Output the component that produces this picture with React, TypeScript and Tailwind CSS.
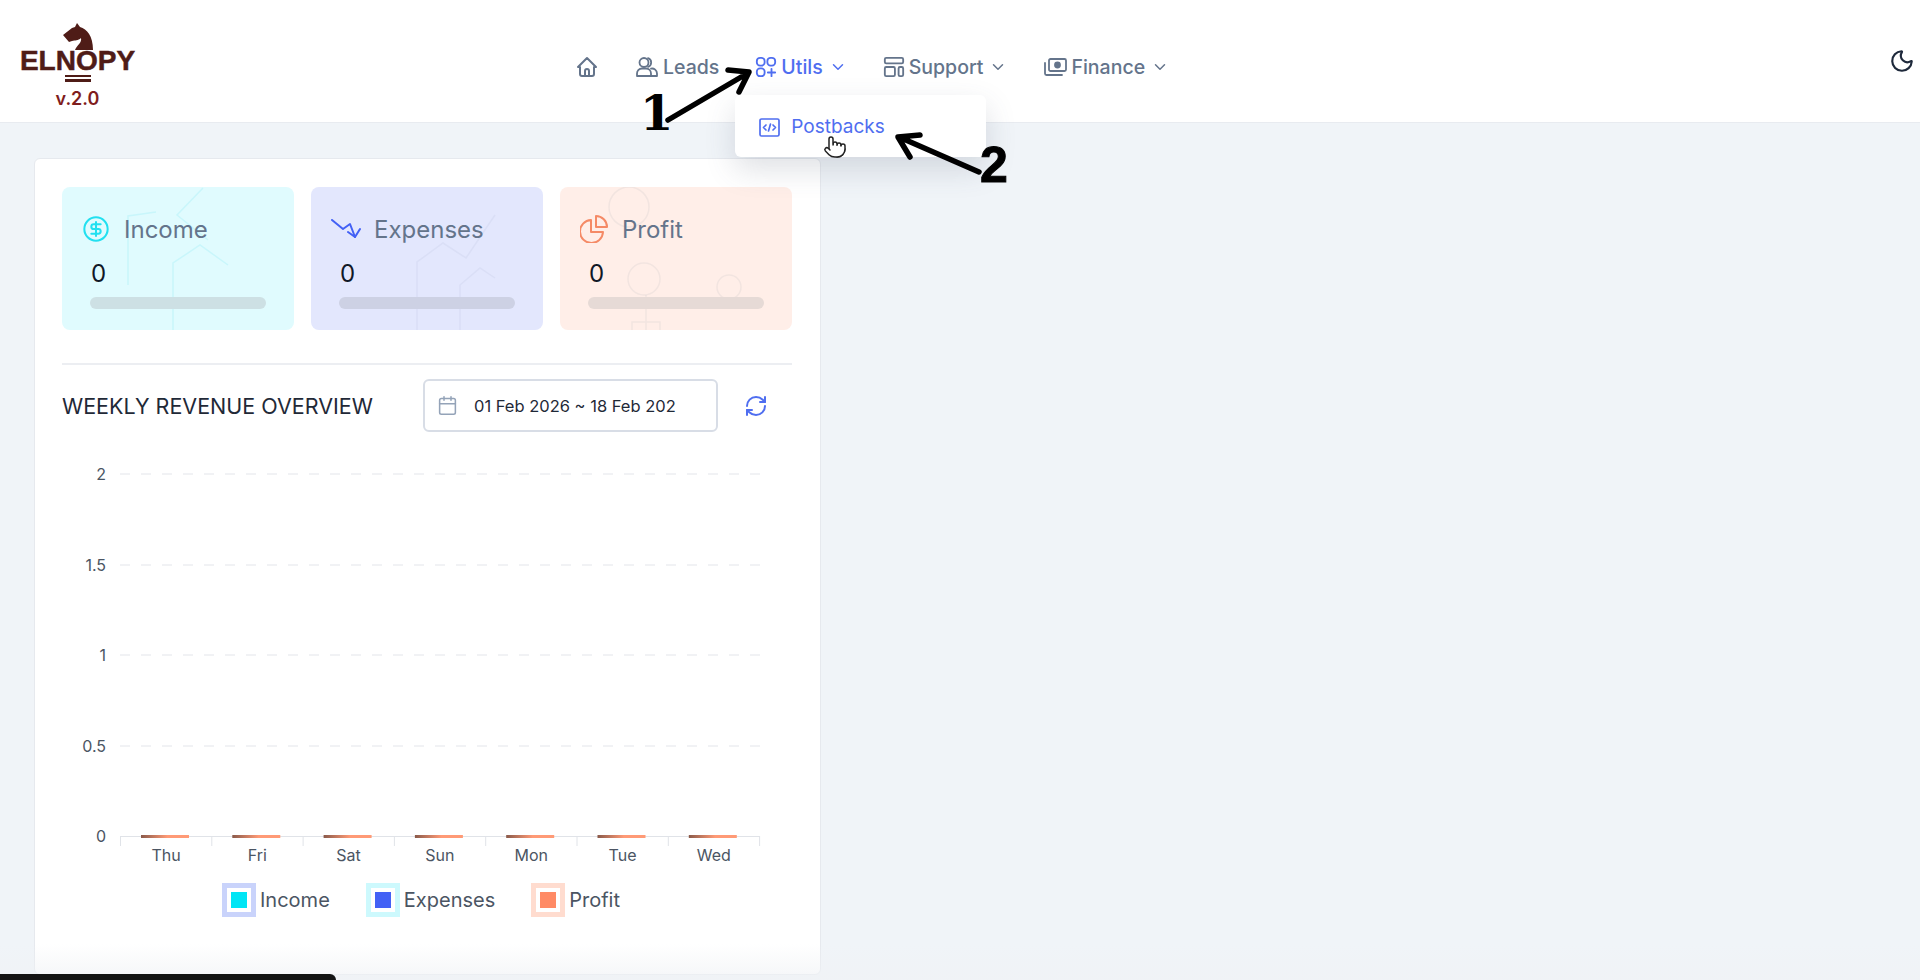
import { Calendar, ChevronDown, CircleDollarSign, Moon, Pointer, RefreshCw } from "lucide-react"
import type { ReactNode } from "react"

const FONT = "font-['Inter','Noto_Sans',sans-serif]"
const DAYS = ["Thu", "Fri", "Sat", "Sun", "Mon", "Tue", "Wed"]
const TICKS = [
  { label: "2", y: 34 },
  { label: "1.5", y: 125 },
  { label: "1", y: 215 },
  { label: "0.5", y: 306 },
]

function HomeIcon() {
  return (
    <svg width="24" height="24" viewBox="0 0 24 24" fill="none" stroke="currentColor" strokeWidth="2" strokeLinecap="round" strokeLinejoin="round">
      <path d="M3 12 12 3l9 9h-2v7a2 2 0 0 1-2 2H7a2 2 0 0 1-2-2v-7z" />
      <path d="M10 21v-5a2 2 0 0 1 4 0v5" />
    </svg>
  )
}

function UsersIcon() {
  return (
    <svg width="24" height="24" viewBox="0 0 24 24" fill="none" stroke="currentColor" strokeWidth="1.8" strokeLinecap="round" strokeLinejoin="round">
      <circle cx="9" cy="7.5" r="4.5" />
      <path d="M13 3.2a4.5 4.5 0 0 1 0 8.6" />
      <path d="M2 21v-2.500a5 5 0 0 1 5-5h4a5 5 0 0 1 5 5V21z" />
      <path d="M16 13.600a5 5 0 0 1 6 4.900V21h-6" />
    </svg>
  )
}

function AppsIcon() {
  return (
    <svg width="22" height="22" viewBox="0 0 24 24" fill="none" stroke="currentColor" strokeWidth="2" strokeLinecap="round" strokeLinejoin="round">
      <rect x="2" y="2" width="8.500" height="8.500" rx="3.500" />
      <rect x="13.500" y="2" width="8.500" height="8.500" rx="3.500" />
      <rect x="2" y="13.500" width="8.500" height="8.500" rx="3.500" />
      <path d="M14 18h8M18 14v8" />
    </svg>
  )
}

function LayoutIcon() {
  return (
    <svg width="22" height="22" viewBox="0 0 24 24" fill="none" stroke="currentColor" strokeWidth="2" strokeLinecap="round" strokeLinejoin="round">
      <rect x="2" y="2" width="20" height="6" rx="1.500" />
      <rect x="2" y="12" width="11" height="10" rx="1.500" />
      <rect x="17" y="12" width="5" height="10" rx="1.500" />
    </svg>
  )
}

function CashIcon() {
  return (
    <svg width="24" height="24" viewBox="0 0 24 24" fill="none" stroke="currentColor" strokeWidth="1.800" strokeLinecap="round" strokeLinejoin="round">
      <rect x="6" y="4" width="17" height="12" rx="1.500" />
      <circle cx="14.500" cy="10" r="2.500" fill="currentColor" />
      <path d="M2 8v10.500A1.500 1.500 0 0 0 3.500 20H19" />
    </svg>
  )
}

function CodeSquareIcon() {
  return (
    <svg width="21" height="21" viewBox="0 0 21 21" fill="none" stroke="currentColor" strokeWidth="1.700" strokeLinecap="round" strokeLinejoin="round">
      <rect x="1" y="2" width="19" height="17" rx="1.500" />
      <path d="M7 8l-2.500 2.500L7 13M14 8l2.500 2.500L14 13M11.500 7l-2 7" />
    </svg>
  )
}

function ExpensesIcon() {
  return (
    <svg width="30" height="20" viewBox="0 0 30 20" fill="none" stroke="#4361f5" strokeWidth="2" strokeLinecap="round" strokeLinejoin="round">
      <path d="M1 1l11 9 7-5 5 13" />
      <path d="M17 13l7 5 5-8" />
    </svg>
  )
}

function ProfitIcon() {
  return (
    <svg width="28" height="28" viewBox="0 0 28 28" fill="none" stroke="#f58a66" strokeWidth="2" strokeLinecap="round" strokeLinejoin="round">
      <path d="M11 5a11.500 11.500 0 1 0 12 12H11z" />
      <path d="M16 1a11 11 0 0 1 11 11H16z" />
    </svg>
  )
}

function ChessKnight() {
  return (
    <svg width="30" height="27" viewBox="0 0 30 27" className="block">
      <path fill="#4f1c17" d="M14 0l3 4c7 2 13 9 13 23H12c2-5 7-7 6-12-3 3-6 2-9 3l-3 1-6-7 9-7 3-1z" />
    </svg>
  )
}

function NavItem({ icon, label, color, hasMenu, children }: { icon: ReactNode; label: string; color: string; hasMenu?: boolean; children?: ReactNode }) {
  return (
    <div className={`relative flex items-center gap-[4px] ${color}`}>
      {icon}
      <span className="text-[19.500px] leading-6 font-medium">{label}</span>
      {hasMenu && <ChevronDown className="ml-[2px] h-[18px] w-[18px]" strokeWidth={2} />}
      {children}
    </div>
  )
}

function StatCard({ icon, label, gap, bg, bar, pattern }: { icon: ReactNode; label: string; gap: string; bg: string; bar: string; pattern: ReactNode }) {
  return (
    <div className={`relative h-[143px] overflow-hidden rounded-lg pt-[28px] pl-[20px] ${bg}`}>
      {pattern}
      <div className={`relative flex h-[28px] items-center ${gap}`}>
        {icon}
        <span className="mt-[2px] text-[24px] leading-7 text-[#64748b]">{label}</span>
      </div>
      <div className="relative mt-[17px] ml-[9px] text-[24px] leading-7 text-[#111827]">0</div>
      <div className={`relative mt-[9px] ml-[8px] h-[12px] w-[176px] rounded-full ${bar}`} />
    </div>
  )
}

function WeeklyChart() {
  return (
    <svg width="730" height="440" viewBox="0 0 730 440" className="mt-[8px] block">
      {TICKS.map((tick) => (
        <g key={tick.label}>
          <line x1="58" x2="698" y1={tick.y} y2={tick.y} stroke="#e3e5ea" strokeWidth="1" strokeDasharray="10 11" />
          <text x="44" y={tick.y + 6} textAnchor="end" fontSize="16" fill="#4b5563">{tick.label}</text>
        </g>
      ))}
      <text x="44" y="402" textAnchor="end" fontSize="16" fill="#4b5563">0</text>
      <defs>
        <linearGradient id="bar-fill" x1="0" x2="1" y1="0" y2="0">
          <stop offset="0" stopColor="#8a5a4a" />
          <stop offset="0.55" stopColor="#ff9a76" />
          <stop offset="1" stopColor="#ff9a76" />
        </linearGradient>
      </defs>
      <line x1="58" x2="698" y1="396.500" y2="396.500" stroke="#e0e3e8" />
      {[...DAYS, ""].map((_, i) => (
        <line key={i} x1={58.500 + i * 91.300} x2={58.500 + i * 91.300} y1="396" y2="406" stroke="#e0e3e8" />
      ))}
      {DAYS.map((day, i) => (
        <g key={day}>
          <rect x={79 + i * 91.300} y="395" width="48" height="3" fill="url(#bar-fill)" />
          <text x={104 + i * 91.300} y="421" textAnchor="middle" fontSize="16" fill="#4b5563">{day}</text>
        </g>
      ))}
    </svg>
  )
}

function LegendItem({ label, ring, fill }: { label: string; ring: string; fill: string }) {
  return (
    <div className="flex items-center gap-[4px]">
      <div className={`flex h-[34px] w-[34px] items-center justify-center ${ring}`}>
        <div className="flex h-[24px] w-[24px] items-center justify-center bg-white">
          <div className={`h-[16px] w-[16px] ${fill}`} />
        </div>
      </div>
      <span className="text-[20px] leading-6 text-[#4b5563]">{label}</span>
    </div>
  )
}

const IncomePattern = (
  <svg className="absolute inset-0" width="232" height="143" fill="none" stroke="#40dcec" strokeOpacity="0.14" strokeWidth="1.500">
    <path d="M66 98V29l28-4M141 1l-26 27 31 25" />
    <path d="M111 143V76l27-18 28 20" />
  </svg>
)

const ExpensesPattern = (
  <svg className="absolute inset-0" width="232" height="143" fill="none" stroke="#8090b0" strokeOpacity="0.09" strokeWidth="1.500">
    <path d="M106 143V75l26-19 23 15 29-43" />
    <path d="M149 143V98l20-17 15 10" />
  </svg>
)

const ProfitPattern = (
  <svg className="absolute inset-0" width="232" height="143" fill="none" stroke="#8090a0" strokeOpacity="0.1" strokeWidth="1.500">
    <circle cx="69" cy="20" r="20" />
    <circle cx="84" cy="92" r="16" />
    <circle cx="169" cy="100" r="12" />
    <path d="M72 143v-8h28v8M86 108v35" />
  </svg>
)

export default function App() {
  return (
    <div className={`relative h-[980px] overflow-hidden bg-[#f0f4f8] ${FONT}`}>
      <header className="relative z-10 flex h-[123px] border-b border-[#e8ebf0] bg-white pl-[21px]">
        <div className="mt-[23px] flex w-[113px] flex-col items-center">
          <ChessKnight />
          <div className="mt-[-2px] font-['Liberation_Sans',sans-serif] text-[28px] leading-[26px] font-bold text-[#4f1c17] [-webkit-text-stroke:0.5px_#4f1c17]">ELNOPY</div>
          <div className="mt-px flex w-[26px] flex-col gap-[2px]">
            <div className="h-[2px] bg-[#4f1c17]" />
            <div className="h-[3px] bg-[#4f1c17]" />
          </div>
          <div className="mt-[7px] text-[18px] leading-[20px] font-semibold text-[#7f1d1d]">v.2.0</div>
        </div>

        <nav className="mt-[55px] ml-[441px] flex h-[24px] items-center gap-[36px]">
          <div className="text-[#64748b]">
            <HomeIcon />
          </div>
          <NavItem icon={<UsersIcon />} label="Leads" color="text-[#64748b]" />
          <NavItem icon={<AppsIcon />} label="Utils" color="text-[#4f6ef0]" hasMenu>
            <div className="absolute top-[40px] left-[-20px] flex h-[62px] w-[251px] items-center gap-[11px] rounded-md bg-white pt-[2px] pl-[24px] text-[#4f6ef0] shadow-[0_12px_30px_rgba(71,85,105,0.18)]">
              <CodeSquareIcon />
              <span className="text-[19px] leading-6">Postbacks</span>
              <Pointer className="absolute top-[40px] left-[88px] h-[24px] w-[24px] fill-white text-[#222222]" strokeWidth={1.500} />
            </div>
          </NavItem>
          <NavItem icon={<LayoutIcon />} label="Support" color="text-[#64748b]" hasMenu />
          <NavItem icon={<CashIcon />} label="Finance" color="text-[#64748b]" hasMenu />
        </nav>

        <Moon className="mt-[48px] mr-[5px] ml-auto h-[26px] w-[26px] text-[#1e293b]" strokeWidth={2} />
      </header>

      <main className="pt-[35px] pl-[34px]">
        <section className="h-[817px] w-[787px] rounded-md border border-[#e6e9ee] bg-white pt-[28px] pr-[28px] pl-[27px]">
          <div className="grid grid-cols-3 gap-[17px]">
            <StatCard
              label="Income"
              gap="gap-[14px]"
              bg="bg-[#e0fbfe]"
              bar="bg-[#cde0e4]"
              pattern={IncomePattern}
              icon={<CircleDollarSign className="h-[28px] w-[28px] text-[#22e0f0]" strokeWidth={1.750} />}
            />
            <StatCard
              label="Expenses"
              gap="gap-[13px]"
              bg="bg-[#e3e7fd]"
              bar="bg-[#cdd1e4]"
              pattern={ExpensesPattern}
              icon={<ExpensesIcon />}
            />
            <StatCard
              label="Profit"
              gap="gap-[14px]"
              bg="bg-[#ffeee8]"
              bar="bg-[#e6dad6]"
              pattern={ProfitPattern}
              icon={<ProfitIcon />}
            />
          </div>

          <div className="mt-[33px] border-t-2 border-[#eceef2] pt-[14px]">
            <div className="flex items-center">
              <h2 className="w-[361px] text-[21.500px] leading-7 whitespace-nowrap text-[#1f2937]">WEEKLY REVENUE OVERVIEW</h2>
              <div className="flex h-[53px] w-[295px] items-center gap-[16px] rounded-md border-2 border-[#d8dde6] pl-[12px]">
                <Calendar className="h-[21px] w-[21px] text-[#94a3b8]" strokeWidth={1.750} />
                <div className="w-[202px] overflow-hidden text-[16.500px] leading-6 whitespace-nowrap text-[#1f2937]">01 Feb 2026 ~ 18 Feb 2026</div>
              </div>
              <RefreshCw className="ml-[26px] h-[24px] w-[24px] text-[#4f6ef0]" strokeWidth={2} />
            </div>
            <WeeklyChart />
            <div className="mt-[3px] flex pl-[160px]">
              <LegendItem label="Income" ring="bg-[#c9d3fb]" fill="bg-[#00e5f5]" />
              <div className="w-[36px]" />
              <LegendItem label="Expenses" ring="bg-[#cdf9fd]" fill="bg-[#4361f5]" />
              <div className="w-[36px]" />
              <LegendItem label="Profit" ring="bg-[#ffdccf]" fill="bg-[#ff8a65]" />
            </div>
          </div>
        </section>
      </main>

      {/* annotations drawn on top of the capture */}
      <svg className="pointer-events-none absolute inset-0 z-20" width="1920" height="980" fill="none" stroke="#000000" strokeWidth="5.500" strokeLinecap="round" strokeLinejoin="round">
        <path d="M668 120l80-47M728 70l21 2-10 20" />
        <path d="M979 172l-80-35M920 135l-22 2 12 20" />
      </svg>
      <div className="absolute top-[87px] left-[640px] z-20 font-['DejaVu_Serif',serif] text-[48px] leading-[52px] font-bold text-black">1</div>
      <div className="absolute top-[139px] left-[980px] z-20 font-['Liberation_Sans',sans-serif] text-[50px] leading-[52px] font-bold text-black [-webkit-text-stroke:1px_black]">2</div>

      <div className="absolute right-0 bottom-0 left-0 z-10 h-[36px] bg-gradient-to-b from-transparent to-[#f0f2f5]/70" />
      <div className="absolute bottom-0 left-0 z-20 h-[6px] w-[336px] rounded-tr-md bg-[#141414]" />
    </div>
  )
}
